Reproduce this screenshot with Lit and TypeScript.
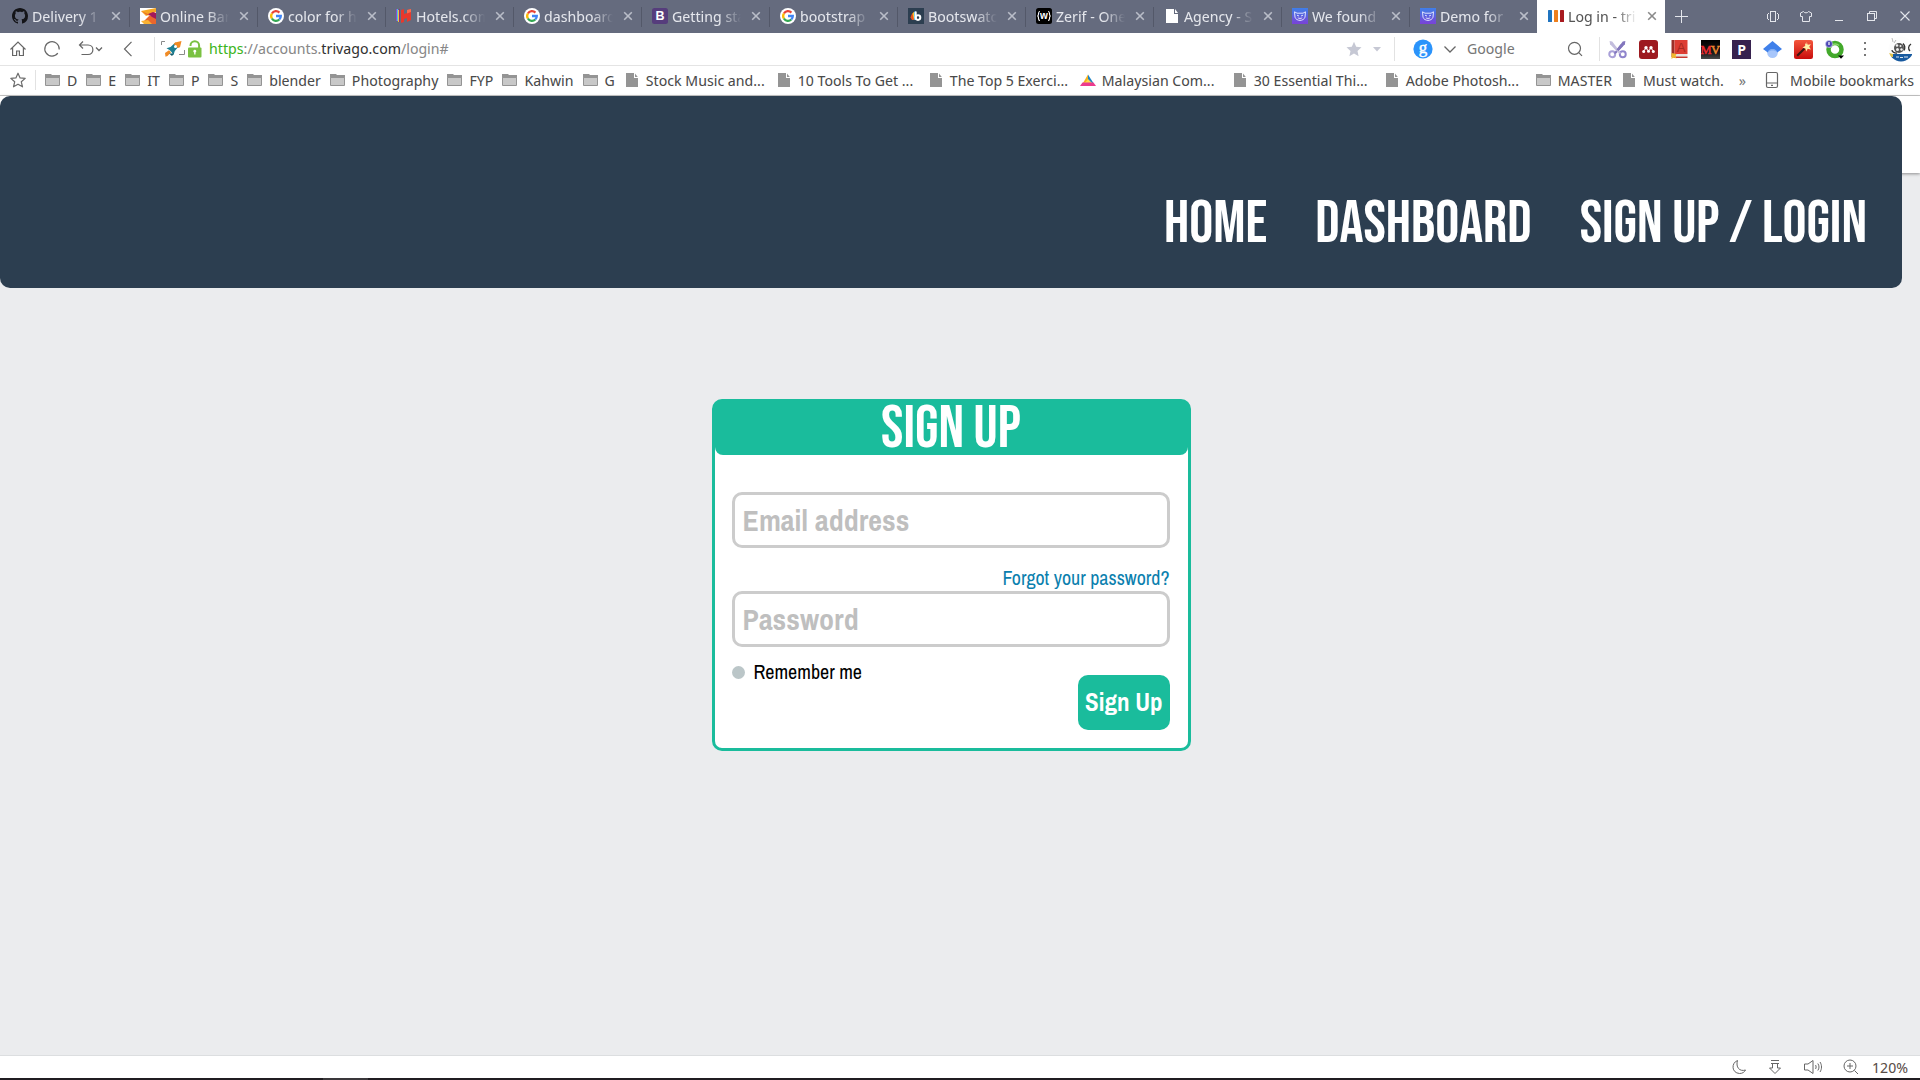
import { LitElement, html, css, svg, nothing, type SVGTemplateResult } from "lit";
import { customElement, state } from "lit/decorators.js";
import { classMap } from "lit/directives/class-map.js";

/* ---------- icon drawings, one viewBox per glyph ---------- */

const icons: Record<string, { box: string; art: SVGTemplateResult }> = {
  github: {
    box: "0 0 16 16",
    art: svg`<path fill="#141418" fill-rule="evenodd" d="M8 0C3.58 0 0 3.58 0 8c0 3.54 2.29 6.53 5.47 7.59.4.07.55-.17.55-.38 0-.19-.01-.82-.01-1.49-2.01.37-2.53-.49-2.69-.94-.09-.23-.48-.94-.82-1.13-.28-.15-.68-.52-.01-.53.63-.01 1.08.58 1.23.82.72 1.21 1.87.87 2.33.66.07-.52.28-.87.51-1.07-1.78-.2-3.64-.89-3.64-3.95 0-.87.31-1.59.82-2.15-.08-.2-.36-1.02.08-2.12 0 0 .67-.21 2.2.82.64-.18 1.32-.27 2-.27s1.36.09 2 .27c1.53-1.04 2.2-.82 2.2-.82.44 1.1.16 1.92.08 2.12.51.56.82 1.27.82 2.15 0 3.07-1.87 3.75-3.65 3.95.29.25.54.73.54 1.48 0 1.07-.01 1.93-.01 2.2 0 .21.15.46.55.38A8.01 8.01 0 0 0 16 8c0-4.42-3.58-8-8-8z"/>`,
  },
  bank: {
    box: "0 0 16 16",
    art: svg`<rect width="16" height="16" fill="#fff"/><path fill="#f7a823" d="M1 3l15-3v4L6 8z"/><path fill="#e9662c" d="M1 3l9 4-6 6 6 3h6V9L7 7z"/><path fill="#f9b233" d="M1 13l7-1 4 4H4z"/><path fill="#a3195b" d="M8 6l5-2 3 1v6l-4-2z"/>`,
  },
  google: {
    box: "0 0 16 16",
    art: svg`<circle cx="8" cy="8" r="8" fill="#fff"/><g fill="none" stroke-width="2.3"><path stroke="#ea4335" d="M3.9 5.5A4.8 4.8 0 0 1 11.4 4.6"/><path stroke="#fbbc05" d="M3.9 10.5a4.8 4.8 0 0 1 0-5"/><path stroke="#34a853" d="M11.3 11.5a4.8 4.8 0 0 1-7.4-1"/><path stroke="#4285f4" d="M8 8h4.8a4.8 4.8 0 0 1-1.5 3.5"/></g>`,
  },
  hotels: {
    box: "0 0 16 16",
    art: svg`<path fill="#8a4fd0" d="M0 1h1v12H0z"/><path fill="#4fc0e6" d="M1 1h1v12H1z"/><path fill="#f2c33a" d="M2 2h1v12H2z"/><path fill="#8b2f7f" d="M3 1h1v13H3z"/><path fill="#e8392c" d="M5 2l3-1v5l3-1V2l4-1v11l-4 2v-4l-3 1v3l-3 1z"/><path fill="#f96c4e" d="M11 2l4-1v3l-4 1.500z"/>`,
  },
  bootstrap: {
    box: "0 0 16 16",
    art: svg`<rect width="16" height="16" rx="2.5" fill="#563d7c"/><text x="8" y="12.4" font-family="Liberation Sans, sans-serif" font-size="12.5" font-weight="700" fill="#fff" text-anchor="middle">B</text>`,
  },
  bootswatch: {
    box: "0 0 16 16",
    art: svg`<rect width="16" height="16" fill="#2c3e50"/><path fill="#e95420" d="M2.5 9.5C3 7 4.500 5 6 4v8H4z"/><path fill="#f7c52b" d="M4.500 5.500L6 4v8z"/><path fill="#4fb9e8" d="M6 4l2-1v9H6z"/><circle cx="10" cy="9.600" r="2.300" fill="none" stroke="#fff" stroke-width="2"/><path fill="#fff" d="M6.700 3.500h2v7h-2z"/>`,
  },
  zerif: {
    box: "0 0 16 16",
    art: svg`<rect width="16" height="16" rx="2.500" fill="#000"/><g fill="none" stroke="#fff" stroke-width="1.100"><path d="M4 3.500c-1.500 0-1.500.8-1.500 2S2.500 8 1.300 8c1.200 0 1.200 1.300 1.200 2.500s0 2 1.500 2M12 3.500c1.500 0 1.500.8 1.500 2S13.500 8 14.700 8c-1.200 0-1.200 1.300-1.200 2.500s0 2-1.500 2"/></g><text x="8" y="11" font-family="Liberation Sans, sans-serif" font-size="10" font-weight="700" fill="#fff" text-anchor="middle">w</text>`,
  },
  sheet: { box: "0 0 16 16", art: svg`<path fill="#fff" d="M2 1h8v5h4v9H2z"/><path fill="#fff" d="M11 1l3 4h-3z"/>` },
  page: { box: "0 0 16 16", art: svg`<path fill="#949494" d="M2 1h8v5h4v9H2z"/><path fill="#949494" d="M11 1.500L13.800 5H11z"/>` },
  mask: {
    box: "0 0 16 16",
    art: svg`<defs><linearGradient id="m" x2="0" y2="1"><stop stop-color="#3f7fe8"/><stop offset="1" stop-color="#7a42d6"/></linearGradient></defs><rect width="16" height="16" fill="url(#m)"/><g fill="none" stroke="#dfe2ff" stroke-width="1"><path d="M2.500 3.800L5 5.200h6l2.500-1.400-.5 5.400c-.6 2-2.800 3.200-5 3.200s-4.400-1.200-5-3.200z"/><path d="M5 7.200l2 .8M11 7.200L9 8M5.800 9.800c1 .8 3.400.8 4.400 0"/></g>`,
  },
  trivago: {
    box: "0 0 16 16",
    art: svg`<rect y="2" width="4" height="12" rx=".6" fill="#1f74c0"/><rect x="6" y="2" width="4" height="12" rx=".6" fill="#ee7f1d"/><rect x="12" y="2" width="4" height="12" rx=".6" fill="#a81a1f"/>`,
  },
  cross: { box: "0 0 16 16", art: svg`<path stroke="currentColor" stroke-width="1.600" d="M4.200 4.200l7.600 7.600M11.800 4.200l-7.600 7.600"/>` },
  plus: { box: "0 0 16 16", art: svg`<path stroke="currentColor" stroke-width="1" d="M8.500 2v13M2 8.500h13"/>` },
  vibrate: {
    box: "0 0 16 16",
    art: svg`<g fill="none" stroke="currentColor"><rect x="5.500" y="3.500" width="5" height="10"/><path d="M3.500 5v1M3.500 11v1M12.500 5v1M12.500 11v1M2.500 6v5M13.500 6v5"/></g>`,
  },
  shirt: {
    box: "0 0 16 16",
    art: svg`<path fill="none" stroke="currentColor" d="M5.500 3.500L2.500 5v3.500h2v5h7v-5h2V5l-3-1.500C10 5.300 6 5.300 5.500 3.500z"/>`,
  },
  minimize: { box: "0 0 16 16", art: svg`<path stroke="currentColor" stroke-width="1" d="M4 12.500h8"/>` },
  restore: {
    box: "0 0 16 16",
    art: svg`<g fill="none" stroke="currentColor"><rect x="3.500" y="5.500" width="7" height="7"/><path d="M5.500 5V3.500h7v7H11"/></g>`,
  },
  shut: { box: "0 0 16 16", art: svg`<path stroke="currentColor" stroke-width="1.100" d="M3.500 3.500l9 9M12.500 3.500l-9 9"/>` },
  home: { box: "0 0 18 18", art: svg`<path fill="none" stroke="currentColor" stroke-width="1.200" d="M1.500 9.500L9 2l7.500 7.500M3.600 8v7.500h4V11h2.800v4.500h4V8"/>` },
  reload: { box: "0 0 18 18", art: svg`<path fill="none" stroke="currentColor" stroke-width="1.200" d="M14.800 13.200A7.200 7.200 0 1 1 16.200 9.500"/>` },
  undo: { box: "0 0 18 18", art: svg`<path fill="none" stroke="currentColor" stroke-width="1.200" d="M6 1.500L2.500 5 6 8.500M2.500 5H11c6.500 0 6.500 9.500 0 9.500H4.500"/>` },
  small: { box: "0 0 8 8", art: svg`<path fill="none" stroke="currentColor" stroke-width="1.300" d="M1 2.500L4 5.500l3-3"/>` },
  back: { box: "0 0 18 18", art: svg`<path fill="none" stroke="currentColor" stroke-width="1.200" d="M12.500 1.800L5.500 9l7 7.200"/>` },
  rocket: {
    box: "0 0 26 18",
    art: svg`<g fill="none" stroke="#8a8a8a"><path d="M1.500 5V1.500H5M24.500 10v4.500H19"/></g><path fill="#1b7f93" d="M6.500 8.200l4-1.200 5-4.500 3.500 3.500-4.200 5-1.300 4-2-3-2-2z"/><path fill="#f08a24" d="M15 2.500L21.500 1 20 7.300 17.800 8l-4-4zM5 13l4-2.800 2 2L7.500 16l-2 .8z"/><circle cx="15.500" cy="6.500" r="1.500" fill="#fff"/><path fill="#145b69" d="M9 13.500l5 0-2 2.500z"/>`,
  },
  lock: {
    box: "0 0 14 18",
    art: svg`<path fill="none" stroke="#7ac142" stroke-width="2" d="M2.500 6V5.500a4.300 4.300 0 0 1 8.600 0V8"/><rect y="7.500" width="13.500" height="10" rx="1" fill="#7ac142"/><path fill="#fff" d="M5.300 11.200a1.500 1.500 0 1 1 2.200 1.300v2H6.200v-2a1.500 1.500 0 0 1-.9-1.300z"/>`,
  },
  star: { box: "0 0 16 16", art: svg`<path fill="#c6c8d4" d="M8 .8l2.200 4.900 5.300.6-4 3.600 1.100 5.300L8 12.500l-4.600 2.700 1.100-5.300-4-3.600 5.300-.6z"/>` },
  caret: { box: "0 0 10 10", art: svg`<path fill="#c6c8d4" d="M1 3h8L5 7.500z"/>` },
  engine: {
    box: "0 0 20 20",
    art: svg`<circle cx="10" cy="10" r="9.600" fill="#2a93fb"/><text x="10" y="13.500" font-family="Liberation Serif, serif" font-size="17" fill="#fff" stroke="#fff" stroke-width=".4" text-anchor="middle">g</text>`,
  },
  chevron: { box: "0 0 14 14", art: svg`<path fill="none" stroke="currentColor" stroke-width="1.300" d="M1.500 4.500L7 10l5.500-5.500"/>` },
  search: { box: "0 0 16 16", art: svg`<g fill="none" stroke="currentColor" stroke-width="1.200"><circle cx="7.500" cy="7.300" r="6"/><path d="M12 11.800l3 3"/></g>` },
  scissors: {
    box: "0 0 18 18",
    art: svg`<g fill="none" stroke-width="1.900"><circle cx="4" cy="13.500" r="2.800" stroke="#a9a0d8"/><circle cx="14" cy="13.500" r="2.800" stroke="#8f84cc"/></g><path fill="#8276bd" d="M5.500 12.500L14 1.500 16.500 1l-.5 3-8.500 9z"/><path fill="#c3bddd" d="M12.500 12.500L4 1.500 1.500 1 2 4l8.500 9z"/><path fill="#8276bd" d="M8 9l4-5 2 2-4 4.500z"/>`,
  },
  mendeley: {
    box: "0 0 19 19",
    art: svg`<rect width="19" height="19" rx="3" fill="#9d1a20"/><g fill="#fff"><circle cx="7" cy="7.800" r="1.700"/><circle cx="12" cy="7.800" r="1.700"/><circle cx="4.700" cy="11.500" r="1.500"/><circle cx="9.500" cy="11.300" r="1.500"/><circle cx="14.300" cy="11.500" r="1.500"/></g><path fill="none" stroke="#fff" stroke-width="1" d="M4.700 11L7 8l2.500 3L12 8l2.300 3"/>`,
  },
  pdf: {
    box: "0 0 18 19",
    art: svg`<path fill="#9b2f28" d="M1 0h3v17H1z"/><path fill="#dd3d33" d="M4 0h13v14H4z"/><path fill="#e9e2df" d="M3 14h14v2.500H3z"/><path fill="#c7382f" d="M3 16.500h14V18H3z"/><path fill="#f1b82d" d="M1 13l5 1-1 2 1 2.500-3-1L1 19z"/><text x="10.500" y="12" font-family="Liberation Sans, sans-serif" font-size="13" fill="#a82921" text-anchor="middle">A</text>`,
  },
  mv: {
    box: "0 0 19 19",
    art: svg`<defs><linearGradient id="k" x2="0" y2="1"><stop stop-color="#000"/><stop offset=".7" stop-color="#1c1c1c"/><stop offset="1" stop-color="#4a4a4a"/></linearGradient></defs><rect width="19" height="19" fill="url(#k)"/><g font-family="Liberation Serif, serif" font-size="12.500" stroke-width=".5"><text x="-.5" y="14" fill="#ee2a30" stroke="#ee2a30">M</text><text x="10" y="14" fill="#ee8a30" stroke="#ee8a30">V</text></g>`,
  },
  pin: {
    box: "0 0 19 19",
    art: svg`<rect width="19" height="19" fill="#37224f"/><text x="9.700" y="14.500" font-family="Open Sans, sans-serif" font-size="14" font-weight="700" fill="#fff" text-anchor="middle">P</text>`,
  },
  scholar: {
    box: "0 0 18 18",
    art: svg`<circle cx="9" cy="12" r="5" fill="#a7c6fb"/><path fill="#3f80ea" d="M9 1L0 8.500l4.500 3.300C6 7.800 12 7.800 13.500 11.800L18 8.500z"/><path fill="#7eacf4" d="M4.500 11.500c1.500-4 7.500-4 9 0C11 9.500 7 9.500 4.500 11.500z"/>`,
  },
  wand: {
    box: "0 0 18 18",
    art: svg`<defs><linearGradient id="w" x2="0" y2="1"><stop stop-color="#f4573c"/><stop offset="1" stop-color="#c80c0c"/></linearGradient></defs><rect width="18" height="18" rx="2" fill="url(#w)"/><path stroke="#3a1712" stroke-width="2" d="M3 15l7-7"/><path fill="#fff1a8" d="M12 2l1 2.600 3-.6-1.600 2.500L16 9l-3-.6L11.500 11l-.6-3L8 7l2.600-1.200L10.500 3l1.300 1z"/>`,
  },
  ring: {
    box: "0 0 19 19",
    art: svg`<circle cx="10" cy="9.500" r="6.500" fill="none" stroke="#43a92b" stroke-width="4.500"/><path fill="none" stroke="#8bd96b" stroke-width="1.500" d="M5 8a5.500 5.500 0 0 1 9-2.500"/><circle cx="4" cy="4" r="3.500" fill="#4b46b4" stroke="#d9d8f5" stroke-width=".6"/><path stroke="#fff" stroke-width="1.200" d="M4 2v3"/><path fill="#000" d="M13 15.500h6l-3 3.300z"/>`,
  },
  dots: { box: "0 0 4 18", art: svg`<g fill="#777"><path d="M1 2h2v2H1zM1 8h2v2H1zM1 14h2v2H1z"/></g>` },
  avatar: {
    box: "0 0 26 26",
    art: svg`<defs><clipPath id="a"><circle cx="13" cy="13" r="12.500"/></clipPath></defs><g clip-path="url(#a)"><rect width="26" height="26" fill="#fdfdfd"/><path fill="#17599f" d="M3 18h21v8H3z"/><path fill="#d9e6f3" d="M8 20.500h3v1H8zM12 21h3v1h-3zM16 20.500h4v1h-4z"/><path fill="#e0c04a" d="M1 17l4 1v3H2z"/></g><circle cx="11" cy="12" r="5" fill="#555"/><g fill="#f0f0f0"><circle cx="9" cy="9.500" r="1.300"/><circle cx="12.500" cy="10" r="1"/><circle cx="9.500" cy="13.500" r="1.500"/><circle cx="13.500" cy="13.500" r="1.200"/></g><path fill="none" stroke="#333" stroke-width="1.300" d="M15 7.500c2 2 2 5 1 7M23 8c-3 2-3 5-1 7M4 14c0 2 3 3.500 5 3"/><path stroke="#bbb" d="M4 2l1 4M8 4l-2 3"/>`,
  },
  outline: { box: "0 0 18 18", art: svg`<path fill="none" stroke="#6b6b6b" stroke-width="1.200" stroke-linejoin="round" d="M9 2.200l2.100 4.700 5.100.5-3.900 3.400 1.200 5L9 13.200l-4.500 2.600 1.200-5L1.800 7.400l5.100-.5z"/>` },
  folder: { box: "0 0 16 16", art: svg`<path fill="#949494" d="M0 2h6l1 1h8v3H0z"/><path fill="#c8c8c8" stroke="#949494" d="M.5 5.500h14v8H.5z"/>` },
  peak: { box: "0 0 16 16", art: svg`<path fill="#f8b31c" d="M8 2.500v8L3 11z"/><path fill="#1d83c6" d="M8 2.500L14 12l-6-3z"/><path fill="#ffd94f" d="M8 7l4 4H5z"/><path fill="#ec3b8e" d="M2.500 10.500h11L16 14H0z"/>` },
  phone: { box: "0 0 14 18", art: svg`<g fill="none" stroke="#666" stroke-width="1.200"><rect x="1.500" y="1.500" width="11" height="15" rx="1.500"/><path d="M1.500 12h11M6 14.300h2"/></g>` },
  moon: { box: "0 0 16 16", art: svg`<path fill="none" stroke="currentColor" d="M6.500 1.500c-6.500 2.500-6 12.500 2 13 3 .1 5-1.500 6-3.500-6 2-10-3-8-9.500z"/>` },
  download: { box: "0 0 16 16", art: svg`<g fill="none" stroke="currentColor"><path d="M4 1.500h8M4 4.500h8M5.500 4.500V9h-3L8 14.500 13.500 9h-3V4.500"/></g>` },
  sound: { box: "0 0 20 16", art: svg`<g fill="none" stroke="currentColor"><path d="M1.500 5v6H5l5 3.500v-13L5 5zM12.500 6c.8 1 .8 3 0 4M14.800 4.500c1.600 2 1.600 5 0 7M17 3c2 3 2 7 0 10"/></g>` },
  zoom: { box: "0 0 16 16", art: svg`<g fill="none" stroke="currentColor"><circle cx="7" cy="7" r="6"/><path d="M7 4v6M4 7h6M11.500 11.500L15 15"/></g>` },
};

const icon = (name: string, width = 16, height = width) =>
  html`<svg viewBox=${icons[name].box} width=${width} height=${height} aria-hidden="true">${icons[name].art}</svg>`;

/* ---------- browser tab strip ---------- */

@customElement("tab-strip")
export class TabStrip extends LitElement {
  static styles = css`
    :host { display: flex; align-items: stretch; height: 33px; background: #656b7e; color: #e4e6ec; font: 15px/20px "Noto Sans Display", "Noto Sans", sans-serif; }
    svg { display: block; flex: none; }
    button { border: 0; padding: 0; background: none; color: inherit; font: inherit; display: grid; place-items: center; }
    .tabs { display: flex; min-width: 0; flex: 0 1 auto; padding-left: 1px; }
    .tab { flex: 0 1 128px; width: 128px; min-width: 0; box-sizing: border-box; display: flex; align-items: center; padding: 0 5px 2px 11px; position: relative; }
    .tab + .tab::before { content: ""; position: absolute; left: 0; top: 7px; bottom: 6px; width: 1px; background: #535869; }
    .name { flex: 1; min-width: 0; display: flex; align-items: center; gap: 4px; }
    .title { flex: 1; min-width: 0; white-space: nowrap; mask-image: linear-gradient(90deg, #000 66%, transparent 96%); }
    .close { width: 16px; height: 16px; margin-left: 4px; color: #b9bdc8; }
    .tabs .active { background: #fff; color: #555; }
    .tabs .active::before { display: none; }
    .active .close { color: #8a8a8a; }
    .add { width: 31px; padding-bottom: 2px; }
    .window { margin-left: auto; display: flex; align-items: center; gap: 17px; padding: 0 7px 2px 0; }
  `;

  private tabs = [
    ["github", "Delivery 1"], ["bank", "Online Bar"], ["google", "color for h"], ["hotels", "Hotels.com"],
    ["google", "dashboard"], ["bootstrap", "Getting sta"], ["google", "bootstrap"], ["bootswatch", "Bootswatc"],
    ["zerif", "Zerif - One"], ["sheet", "Agency - S"], ["mask", "We found"], ["mask", "Demo for"], ["trivago", "Log in - tri"],
  ];

  render() {
    const last = this.tabs.length - 1;
    return html`
      <div class="tabs">
        ${this.tabs.map(([glyph, title], i) => html`
          <div class=${classMap({ tab: true, active: i === last })}>
            <div class="name">${icon(glyph)}<span class="title">${title}</span></div>
            <button class="close" aria-label="Close">${icon("cross")}</button>
          </div>`)}
      </div>
      <button class="add" aria-label="New tab">${icon("plus")}</button>
      <div class="window">
        ${["vibrate", "shirt", "minimize", "restore", "shut"].map((n) => html`<button aria-label=${n}>${icon(n)}</button>`)}
      </div>`;
  }
}

/* ---------- address and search row ---------- */

@customElement("address-row")
export class AddressRow extends LitElement {
  static styles = css`
    :host { display: flex; align-items: center; height: 33px; background: #fff; border-bottom: 1px solid #e4e4e4; color: #666; font: 15px/20px "Noto Sans Display", "Noto Sans", sans-serif; }
    svg { display: block; flex: none; }
    button { border: 0; padding: 0; background: none; color: inherit; display: flex; align-items: center; }
    .nav { display: flex; align-items: center; gap: 16px; padding-left: 9px; }
    .rule { width: 1px; height: 24px; background: #e2e2e2; }
    .nav + .rule { margin-left: 17px; }
    .site { display: flex; align-items: center; gap: 2px; padding: 0 7px 0 5px; }
    .url { flex: 1; min-width: 0; white-space: nowrap; overflow: hidden; padding-bottom: 2px; color: #888; text-decoration: none; }
    .secure { color: #3cb521; }
    .host { color: #333; }
    .marks { display: flex; align-items: center; gap: 10px; padding-right: 12px; }
    .find { display: flex; align-items: center; gap: 10px; width: 204px; box-sizing: border-box; padding: 0 16px 0 18px; }
    .find input { flex: 1; min-width: 0; border: 0; padding: 0 0 2px; background: none; outline: 0; font: inherit; color: #555; }
    .find input::placeholder { color: #777; opacity: 1; }
    .tools { display: flex; align-items: center; gap: 12px; padding: 0 6px 0 8px; }
    .more { padding: 0 9px 0 7px; }
  `;

  render() {
    return html`
      <div class="nav">
        <button aria-label="Home">${icon("home", 18)}</button>
        <button aria-label="Reload">${icon("reload", 18)}</button>
        <button aria-label="Undo">${icon("undo", 18)}${icon("small", 8)}</button>
        <button aria-label="Back">${icon("back", 18)}</button>
      </div>
      <span class="rule"></span>
      <div class="site">${icon("rocket", 26, 18)}${icon("lock", 14, 18)}</div>
      <a class="url" href="#"><span class="secure">https</span>://accounts.<span class="host">trivago.com</span>/login#</a>
      <div class="marks">
        <button aria-label="Bookmark">${icon("star")}</button>
        <button aria-label="Bookmark options">${icon("caret", 10)}</button>
      </div>
      <span class="rule"></span>
      <div class="find">
        ${icon("engine", 20)}${icon("chevron", 14)}
        <input type="text" placeholder="Google" aria-label="Google" />
        <button aria-label="Search">${icon("search")}</button>
      </div>
      <span class="rule"></span>
      <div class="tools">
        ${["scissors", "mendeley", "pdf", "mv", "pin", "scholar", "wand", "ring"].map((n) => html`<button aria-label=${n}>${icon(n, 19)}</button>`)}
        <button class="more" aria-label="Menu">${icon("dots", 4, 18)}</button>
        <button aria-label="Profile">${icon("avatar", 26)}</button>
      </div>`;
  }
}

/* ---------- bookmarks row ---------- */

@customElement("bookmark-row")
export class BookmarkRow extends LitElement {
  static styles = css`
    :host { display: flex; align-items: center; height: 30px; padding-bottom: 1px; background: #fff; border-bottom: 1px solid #c9c9c9; color: #4a4a4a; font: 15px/20px "Noto Sans Display", "Noto Sans", sans-serif; }
    svg { display: block; flex: none; }
    button { border: 0; padding: 0; background: none; display: flex; }
    .fav { padding: 0 8px 0 9px; }
    .rule { width: 1px; height: 20px; background: #e2e2e2; margin-right: 9px; }
    .list { display: flex; min-width: 0; }
    a { display: flex; align-items: center; gap: 6px; padding-right: 9px; color: inherit; text-decoration: none; white-space: nowrap; }
    .long { flex: 0 0 152px; box-sizing: border-box; padding-right: 0; }
    .over { padding: 0 4px 0 6px; color: #777; }
    .mobile { margin-left: auto; padding-right: 6px; gap: 11px; }
  `;

  private marks: [string, string, boolean?][] = [
    ["folder", "D"], ["folder", "E"], ["folder", "IT"], ["folder", "P"], ["folder", "S"], ["folder", "blender"],
    ["folder", "Photography"], ["folder", "FYP"], ["folder", "Kahwin"], ["folder", "G"],
    ["page", "Stock Music and...", true], ["page", "10 Tools To Get ...", true], ["page", "The Top 5 Exerci...", true],
    ["peak", "Malaysian Com...", true], ["page", "30 Essential Thi...", true], ["page", "Adobe Photosh...", true],
    ["folder", "MASTER"], ["page", "Must watch."],
  ];

  render() {
    return html`
      <button class="fav" aria-label="Bookmarks">${icon("outline", 18)}</button>
      <span class="rule"></span>
      <div class="list">
        ${this.marks.map(([glyph, label, long]) => html`<a href="#" class=${long ? "long" : nothing}>${icon(glyph)}<span>${label}</span></a>`)}
      </div>
      <span class="over">»</span>
      <a href="#" class="mobile">${icon("phone", 14, 18)}<span>Mobile bookmarks</span></a>`;
  }
}

/* ---------- sign up form ---------- */

@customElement("sign-card")
export class SignCard extends LitElement {
  static styles = css`
    :host { display: block; font-family: "Archivo Narrow", "Liberation Sans", sans-serif; }
    * { box-sizing: border-box; }
    form { border: 3px solid #1abc9c; border-radius: 10px; background: #fff; }
    h1 { margin: 0; height: 53px; background: #1abc9c; border-radius: 0 0 8px 8px; color: #fff; text-align: center; font: 400 60px/55px "Bebas Neue", "Oswald", sans-serif; }
    .body { display: flex; flex-direction: column; padding: 37px 18px 18px 17px; }
    .field { width: 100%; height: 56px; border: 3px solid #ccc; border-radius: 10px; padding: 0 8px; background: #fff; font: 700 30px/40px "Archivo Narrow", "Liberation Sans", sans-serif; color: #444; outline: 0; }
    .field::placeholder { color: #bfbfbf; opacity: 1; }
    .forgot { align-self: flex-end; margin-top: 16px; font-size: 20px; line-height: 27px; color: #0b7fae; text-decoration: none; }
    .foot { display: flex; justify-content: space-between; align-items: flex-start; padding-top: 12px; }
    .remember { display: flex; align-items: center; gap: 9px; font-size: 20px; line-height: 26px; color: #000; }
    .remember input { appearance: none; margin: 0; width: 13px; height: 13px; border-radius: 50%; background: #bbc6c8; }
    .remember input:checked { background: #1abc9c; }
    .send { margin-top: 16px; height: 55px; border: 0; border-radius: 10px; padding: 0 7px 2px; background: #1abc9c; color: #fff; font: 700 25px/32px "Archivo Narrow", "Liberation Sans", sans-serif; }
  `;

  @state() private sent = false;

  private submit(event: Event) {
    event.preventDefault();
    this.sent = true;
  }

  render() {
    return html`
      <form @submit=${this.submit} aria-busy=${this.sent}>
        <h1>SIGN UP</h1>
        <div class="body">
          <input class="field" type="email" placeholder="Email address" aria-label="Email address" />
          <a class="forgot" href="#">Forgot your password?</a>
          <input class="field" type="password" placeholder="Password" aria-label="Password" />
          <div class="foot">
            <label class="remember"><input type="radio" name="remember" />Remember me</label>
            <button class="send" type="submit">Sign Up</button>
          </div>
        </div>
      </form>`;
  }
}

/* ---------- page ---------- */

@customElement("app-root")
export class AppRoot extends LitElement {
  static styles = css`
    :host { display: flex; flex-direction: column; min-height: 100vh; background: #ebecee; }
    * { box-sizing: border-box; }
    main { flex: 1; display: flex; flex-direction: column; border-bottom: 1px solid #dcdee0; }
    .top { display: grid; align-items: start; }
    .strip { grid-area: 1 / 1; height: 77px; background: #fff; box-shadow: 0 1px 3px rgba(0, 0, 0, 0.4); }
    .banner { grid-area: 1 / 1; z-index: 1; margin-right: 18px; height: 192px; padding: 0 35px 37px; border-radius: 10px; background: #2c3e50; display: flex; justify-content: flex-end; align-items: flex-end; gap: 48px; }
    .banner a { color: #fff; text-decoration: none; font: 400 60px/54px "Bebas Neue", "Oswald", sans-serif; }
    .content { display: flex; justify-content: center; padding: 111px 18px 60px 0; }
    sign-card { flex: 0 1 479px; }
    .status { display: flex; align-items: center; justify-content: flex-end; height: 22px; background: #fff; color: #5a4e48; padding-right: 12px; font: 15px/20px "Noto Sans Display", "Noto Sans", sans-serif; }
    .status button { border: 0; padding: 0; background: none; color: #666; display: flex; }
    .status svg { display: block; }
    .controls { display: flex; align-items: center; gap: 20px; padding-right: 13px; }
    .dock { height: 2px; background: #201d21; display: flex; padding-left: 323px; }
    .running { width: 45px; background: #3a383b; }
  `;

  render() {
    return html`
      <tab-strip></tab-strip>
      <address-row></address-row>
      <bookmark-row></bookmark-row>
      <main>
        <div class="top">
          <div class="strip"></div>
          <nav class="banner">
            <a href="#">HOME</a><a href="#">DASHBOARD</a><a href="#">SIGN UP / LOGIN</a>
          </nav>
        </div>
        <div class="content"><sign-card></sign-card></div>
      </main>
      <div class="status">
        <div class="controls">
          <button aria-label="Night mode">${icon("moon")}</button>
          <button aria-label="Downloads">${icon("download")}</button>
          <button aria-label="Sound">${icon("sound", 20, 16)}</button>
          <button aria-label="Zoom">${icon("zoom")}</button>
        </div>
        <span>120%</span>
      </div>
      <div class="dock"><span class="running"></span></div>`;
  }
}
